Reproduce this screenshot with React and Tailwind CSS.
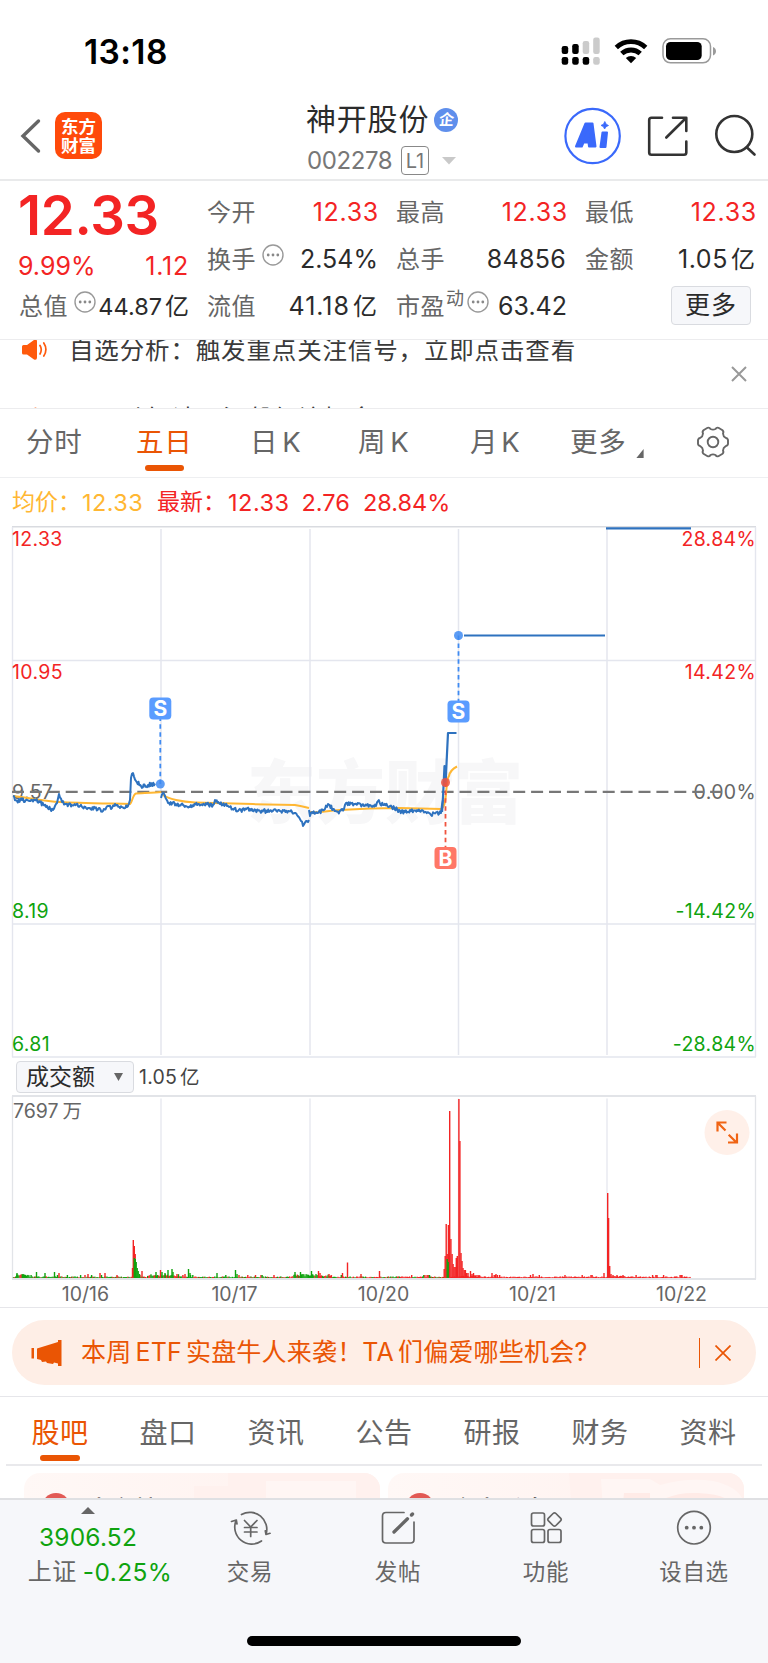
import React from "react";

const FONT = "font-['Inter','Noto_Sans_CJK_SC',sans-serif]";

function rng(seed) {
  let s = seed;
  return () => {
    s = (s * 1664525 + 1013904223) % 4294967296;
    return s / 4294967296;
  };
}

/* Adds minute-by-minute jitter between the key points of an intraday curve. */
function jagged(points, seed, amp) {
  const r = rng(seed);
  const out = [];
  for (let i = 0; i < points.length - 1; i++) {
    const [x0, y0] = points[i];
    const [x1, y1] = points[i + 1];
    const n = Math.max(1, Math.round((x1 - x0) / 0.9));
    for (let k = 0; k < n; k++) {
      const t = k / n;
      const j = k === 0 ? 0 : (r() - 0.5) * amp;
      out.push(`${(x0 + (x1 - x0) * t).toFixed(1)},${(y0 + (y1 - y0) * t + j).toFixed(1)}`);
    }
  }
  out.push(points[points.length - 1].join(","));
  return out.join(" ");
}

const DAY1 = [[13, 796], [17, 801], [22, 800], [35, 800], [40, 802], [46, 807], [53, 810], [57, 803], [59, 794], [62, 802], [66, 804], [72, 805], [80, 806], [88, 808], [95, 808], [103, 811], [108, 806], [112, 808], [115, 804], [120, 808], [128, 806], [130, 800], [131, 778], [133, 773], [136, 781], [141, 786], [148, 785], [155, 783.5]];
const DAY2 = [[161, 798], [163, 793], [168, 803], [176, 804], [190, 807], [199, 804], [213, 805], [215, 800], [220, 804], [228, 806], [238, 811], [250, 809], [260, 811], [280, 811], [292, 812], [297, 815], [301, 821], [303, 826], [306, 821], [309, 820]];
const DAY3 = [[309, 810], [310, 816], [312, 812], [318, 813], [324, 810], [328, 804], [333, 809], [338, 812], [344, 809], [346, 803], [355, 804], [364, 806], [376, 806], [378, 801], [383, 805], [390, 806], [400, 811], [405, 812], [411, 811], [418, 811], [425, 812], [431, 815], [434, 813], [441, 813], [443, 800]];

const CURVES = [jagged(DAY1, 7, 4), jagged(DAY2, 21, 4), jagged(DAY3, 5, 4)];
const V_LINES = [161, 310, 458.5, 607];

function Marker({ x, y, dotY, letter, color, dash }) {
  const y1 = Math.min(y, dotY);
  const y2 = Math.max(y, dotY);
  return (
    <g>
      <line x1={x} x2={x} y1={y1} y2={y2} stroke={dash} strokeWidth="1.8" strokeDasharray="4.5 3.4" />
      <circle cx={x} cy={dotY} r="4.5" fill={dash} fillOpacity="0.85" />
      <rect x={x - 11} y={y - 11} width="22" height="22" rx="4" fill={color} />
      <text x={x} y={y + 7.5} textAnchor="middle" fontSize="21" fontWeight="700" fill="#fff">{letter}</text>
    </g>
  );
}

function AxisLabel({ y, left, right, color }) {
  return (
    <g fontSize="19.5" letterSpacing="0.35" fill={color}>
      <text x="12" y={y}>{left}</text>
      <text x="756" y={y} textAnchor="end">{right}</text>
    </g>
  );
}

function PriceChart() {
  return (
    <svg viewBox="0 526 768 532" className="block h-[532px] w-[768px]">
      <text x="385" y="818" textAnchor="middle" fontSize="69" fontWeight="900" fill="#f7f7f8">东方财富</text>
      <g stroke="#e4e6ee">
        <path d="M12 526.8H756" stroke="#d9dbe0" strokeWidth="1.5" />
        <path d="M12 660.5H756M12 924H756M12 1057H756M12.5 527V1057M755.5 527V1057" strokeWidth="1.4" />
        {V_LINES.map((x) => <path key={x} d={`M${x} 529V1055`} strokeWidth="1.5" />)}
      </g>
      <AxisLabel y={546} left="12.33" right="28.84%" color="#f32424" />
      <AxisLabel y={679} left="10.95" right="14.42%" color="#f32424" />
      <AxisLabel y={798.5} left="9.57" right="0.00%" color="#666" />
      <AxisLabel y={918} left="8.19" right="-14.42%" color="#0fa30f" />
      <AxisLabel y={1050.5} left="6.81" right="-28.84%" color="#0fa30f" />
      <path d="M12 791.8H722" stroke="#777" strokeWidth="2.3" strokeDasharray="12 5.9" />
      <g fill="none" strokeLinejoin="round">
        <g stroke="#ffb733" strokeWidth="2">
          <path d="M13 796C30 798 45 801 60 802S110 803.5 130 804C132 803 133 794 136 793.5S155 793 161 792" />
          <path d="M163 795C168 799 182 802 195 802.5S265 804.5 295 805C301 806 305 807 309 808" />
          <path d="M310 812C315 813.5 325 811 340 810S380 808 400 808L441 809C448 806 445 780 449 776C450 771 453 768.5 457 766.5" />
        </g>
        <g stroke="#2e72bf" strokeWidth="2">
          {CURVES.map((p, i) => <polyline key={i} points={p} />)}
          <path d="M442 812L443 797L444.5 766L445.5 785L446.7 760L448 733H456.5" strokeWidth="2.2" />
          <path d="M464 635.5H605M606 528.3H691" strokeWidth="2.2" />
        </g>
      </g>
      <Marker x={160.3} y={708.5} dotY={784} letter="S" color="#5a9cff" dash="#3f8bf2" />
      <Marker x={458.5} y={711.5} dotY={635.5} letter="S" color="#5a9cff" dash="#3f8bf2" />
      <Marker x={445.5} y={858} dotY={782.5} letter="B" color="#ff7766" dash="#f0543f" />
    </svg>
  );
}

const RED = "#f32424";
const GREEN = "#0fa30f";
const SPIKES = [
  [132.5, 10, RED], [133.3, 38, RED], [134.3, 32, RED], [135.2, 24, RED], [134.3, 20, GREEN], [135.3, 19, GREEN], [136.2, 16, GREEN], [137.2, 10, GREEN], [138.2, 7, GREEN], [139.5, 4, GREEN], [142, 7, RED],
  [17, 5, GREEN], [36.5, 6, GREEN], [45, 5, GREEN], [54.5, 6, GREEN], [59, 5, RED], [88, 4, RED], [100, 5, RED], [105, 5, RED], [117, 3, RED],
  [156, 6, GREEN], [160.5, 8, RED], [162, 6, GREEN], [165, 5, GREEN], [168, 8, GREEN], [172, 9, GREEN], [173, 6, GREEN], [177, 4, RED], [185, 4, RED], [188.5, 9, GREEN], [190, 5, GREEN], [217, 5, GREEN], [235.5, 8, GREEN], [237, 4, GREEN], [274, 3, RED],
  [295, 6, GREEN], [300.5, 6, GREEN], [311.5, 7, GREEN], [318.5, 7, RED], [320, 5, RED], [329, 4, RED], [342.5, 5, RED], [347.5, 15.5, RED], [361, 4, RED], [379.5, 7, RED], [429.5, 3, GREEN],
  [444.2, 9, RED], [445.2, 22, RED], [446.2, 54, RED], [447.2, 24, RED], [448.4, 53, RED], [449.7, 167, RED], [450.9, 39, RED], [452.1, 24, RED], [453.1, 14, RED], [454.1, 11, RED], [455.2, 11, RED], [456.3, 20, RED], [457.3, 22, RED], [458.9, 179, RED], [459.9, 137, RED], [461, 25, RED], [462, 17, RED], [463, 10, RED], [464.2, 8, RED], [465.4, 8, RED], [466.6, 5, RED], [468, 5, RED], [470.5, 7, RED], [472, 4, RED], [473.5, 5, RED], [475, 3, RED], [477, 3, RED], [479, 3, RED], [492, 5, RED], [496, 4, RED], [533, 4, RED], [565, 3, RED],
  [447.2, 19, GREEN], [448.2, 16, GREEN],
  [604, 5, RED], [607.7, 85, RED], [608.6, 60, RED], [609.7, 12, RED], [611, 4, RED], [613, 3, RED], [617, 3, RED], [623, 3, RED], [657, 3, RED], [682, 3, RED],
];

function noiseBars() {
  const r = rng(99);
  const out = [];
  for (let x = 13.5; x < 691; x += 1.1) {
    const late = x > 444;
    const busy = (x > 147 && x < 180) || (x > 292 && x < 332) || (x > 15 && x < 30) || (x > 461 && x < 482) || (x > 611 && x < 625);
    const h = busy ? 1.5 + r() * 2.5 : r() > 0.93 ? 3 : 0.5 + r() * 1.1;
    const up = late || r() > (x < 340 ? 0.62 : 0.42);
    out.push([x, late && busy ? h * 0.6 : h, up ? RED : GREEN]);
  }
  return out;
}
const BARS = [...noiseBars(), ...SPIKES];

function VolumeChart() {
  return (
    <svg viewBox="0 1095 768 186" className="block h-[186px] w-[768px]">
      <g stroke="#e2e4e8" strokeWidth="1.8" fill="none">
        <path d="M12 1096H756M12 1279H756" />
        <path d="M12.5 1096V1279M755.5 1096V1279" strokeWidth="1.3" />
        {V_LINES.map((x) => <path key={x} d={`M${x} 1098.5V1278`} stroke="#e8eaf0" strokeWidth="1.5" />)}
      </g>
      {BARS.map(([x, h, c], i) => <rect key={i} x={x - 0.7} y={1278 - h} width="1.4" height={h} fill={c} />)}
      <text x="13" y="1118" fontSize="19.5" fill="#666">7697<tspan dx="4">万</tspan></text>
      <circle cx="727" cy="1132.5" r="22.5" fill="#fff0e9" />
      <path d="M717.5 1131.5V1122.5H726.5M718 1123L725.5 1130.5M728.7 1134.7L736.5 1142.5M737 1133.5V1142.5H728" fill="none" stroke="#f06414" strokeWidth="2.2" />
    </svg>
  );
}

function StatusBar() {
  return (
    <div className="flex h-[103px] items-start justify-between pl-[84px] pr-[50px]">
      <div className="mt-[32px] text-[33.5px] leading-[40px] font-semibold tracking-[0.4px] text-black">13:18</div>
      <svg viewBox="560 34 158 34" className="mt-[34px] h-[34px] w-[158px]">
        <g fill="#000">
          <rect x="561.7" y="46" width="6.5" height="8" rx="2.2" />
          <rect x="572.2" y="44" width="6.5" height="10" rx="2.2" />
          <rect x="561.7" y="57" width="6.5" height="7.7" rx="2.2" />
          <rect x="572.2" y="57" width="6.5" height="7.7" rx="2.2" />
          <rect x="582.7" y="57" width="6.5" height="7.7" rx="2.2" />
        </g>
        <g fill="#cbcbcb">
          <rect x="582.7" y="41" width="6.5" height="13" rx="2.2" />
          <rect x="593.2" y="37.5" width="6.5" height="16.5" rx="2.2" />
          <rect x="593.2" y="57" width="6.5" height="7.7" rx="2.2" />
        </g>
        <g fill="none" stroke="#000" strokeWidth="4.8">
          <path d="M616.3 47.5A21.5 21.5 0 0 1 645.7 47.5" />
          <path d="M621.8 53.6A13.5 13.5 0 0 1 640.2 53.6" />
        </g>
        <path d="M625.8 58A8 8 0 0 1 636.2 58L631 63.2Z" fill="#000" />
        <rect x="663" y="38.8" width="47.5" height="24" rx="7.5" fill="none" stroke="#9a9a9a" strokeWidth="1.5" />
        <rect x="666" y="42" width="35.7" height="18" rx="4.5" fill="#000" />
        <path d="M713 47V55.5C717 54 717 48.5 713 47Z" fill="#9a9a9a" />
      </svg>
    </div>
  );
}

function Header() {
  return (
    <div className="relative flex h-[78px] items-start justify-between border-b-2 border-[#e9eaeb] pr-[10px] pl-[20px]">
      <div className="flex items-start">
        <svg viewBox="20 117 24 40" className="mt-[14px] h-[40px] w-[24px]">
          <path d="M38.5 121L23 136L38.5 151" fill="none" stroke="#666" strokeWidth="3.4" strokeLinecap="round" />
        </svg>
        <div className="mt-[9px] ml-[11px] flex h-[47px] w-[47px] flex-col items-center justify-center rounded-[10px] bg-[#ff4a0a] text-[17.5px] leading-[19px] font-bold text-white">
          <div>东方</div>
          <div>财富</div>
        </div>
      </div>
      <div className="absolute top-[-6px] left-[306px] flex flex-col">
        <div className="flex items-center">
          <span className="text-[30px] leading-[44px] tracking-[0.8px] text-[#2b2b2b]">神开股份</span>
          <span className="mt-[2px] ml-[5px] flex size-[24px] items-center justify-center rounded-full bg-[#5f8fec] text-[15px] font-bold text-white"><span className="-skew-x-6">企</span></span>
        </div>
        <div className="mt-[5px] flex items-center">
          <span className="w-[84px] pl-[1px] text-[24px] leading-[28px] tracking-[-0.4px] whitespace-nowrap text-[#777]">002278</span>
          <span className="ml-[11px] flex h-[29px] w-[28px] items-center justify-center rounded-[4px] border border-[#888] text-[20px] text-[#777]">L1</span>
          <svg viewBox="0 0 14 8" className="ml-[13px] h-[8px] w-[14px]"><path d="M0 0H14L7 7.5Z" fill="#c9c9c9" /></svg>
        </div>
      </div>
      <svg viewBox="562 105 196 62" className="mt-[2px] h-[62px] w-[196px]">
        <circle cx="592.6" cy="136" r="27.2" fill="none" stroke="#3a69fb" strokeWidth="2.2" />
        <g fill="#3a69fb" stroke="#3a69fb" strokeWidth="2" strokeLinejoin="round">
          <path fillRule="evenodd" d="M576 146.5L585.5 123.5H592.5L595.5 146.5H589L588.5 142.5H583.5L581.8 146.5ZM585.5 137H588.5L587.8 131Z" />
          <path d="M602.5 132.5H607L605.5 147H600.5Z" />
          <path d="M604.8 121.5L606.2 124.2L608.5 125.5L606 126.8L604.6 129L603.3 126.6L601 125.4L603.5 124.2Z" strokeWidth="0.8" />
        </g>
        <g fill="none" stroke="#333" strokeWidth="2.6" strokeLinecap="round" strokeLinejoin="round">
          <path d="M662 117.8H651.5Q649.2 117.8 649.2 120V152.5Q649.2 154.8 651.5 154.8H684Q686.3 154.8 686.3 152.5V141.5" />
          <path d="M673 117.8H686.3V131M685.5 118.5L666.3 137.5" />
          <circle cx="734.3" cy="134" r="18" />
          <path d="M747 147.5L754.5 154.5" />
        </g>
      </svg>
    </div>
  );
}

function Dots() {
  return (
    <svg viewBox="0 0 22 22" className="size-[22px] shrink-0">
      <circle cx="11" cy="11" r="10" fill="none" stroke="#999" strokeWidth="1.4" />
      <g fill="#888"><circle cx="6.2" cy="11" r="1.4" /><circle cx="11" cy="11" r="1.4" /><circle cx="15.8" cy="11" r="1.4" /></g>
    </svg>
  );
}

function Cell({ label, value, unit, red, dots, sup, fit = "text-[25px] tracking-[0.3px]" }) {
  return (
    <div className="flex h-[47px] items-center justify-between">
      <span className="flex items-center text-[24px] tracking-[0.5px] whitespace-nowrap text-[#666]">
        {label}
        {sup && <span className="mt-[-16px] ml-[1px] text-[18px]">{sup}</span>}
        {dots && <span className={sup ? "mt-[-10px] ml-[2px]" : "mt-[-10px] ml-[6px]"}><Dots /></span>}
      </span>
      <span className={`${fit} whitespace-nowrap ${red ? "text-[#f32424]" : "text-[#2b2b2b]"}`}>
        {value}{unit && <span className="ml-[3px] text-[24px] tracking-normal">{unit}</span>}
      </span>
    </div>
  );
}

function Quote() {
  const ones = "text-[25px] tracking-[0.7px] -mr-[2px]";
  return (
    <div className="grid h-[159px] grid-cols-[169px_170px_170px_170px] gap-x-[19px] border-b border-[#ececee] pt-[8px] pl-[19px]">
      <div>
        <div className="-ml-[1px] h-[55px] text-[54.5px] leading-[53px] font-semibold tracking-[-0.3px] text-[#f32424]">12.33</div>
        <div className="-ml-px flex h-[39px] items-center justify-between pt-[7px] text-[25px] text-[#f32424]"><span>9.99%</span><span className="-mr-px tracking-[0.8px]">1.12</span></div>
        <Cell label="总值" value="44.87" unit="亿" dots fit="text-[23.5px] tracking-[0px] -mr-px" />
      </div>
      <div>
        <Cell label="今开" value="12.33" red fit={ones} />
        <Cell label="换手" value="2.54%" dots fit="text-[25px] -mr-[1px]" />
        <Cell label="流值" value="41.18" unit="亿" fit="text-[25px] tracking-[1px]" />
      </div>
      <div>
        <Cell label="最高" value="12.33" red fit={ones} />
        <Cell label="总手" value="84856" />
        <Cell label="市盈" value="63.42" sup="动" dots fit="text-[25px] -mr-px" />
      </div>
      <div>
        <Cell label="最低" value="12.33" red fit={ones} />
        <Cell label="金额" value="1.05" unit="亿" fit="text-[25px] tracking-[0.6px]" />
        <div className="flex h-[47px] items-start justify-end pr-[4px]">
          <div className="mt-[3px] flex h-[39px] w-[80px] items-center justify-center rounded-[4px] border border-[#d9dbe0] bg-[#f6f7fa] text-[25px] tracking-[1px] text-[#2b2b2b]">更多</div>
        </div>
      </div>
    </div>
  );
}

function Speaker() {
  return (
    <svg viewBox="0 0 26 22" className="-mt-px h-[22px] w-[26px] shrink-0">
      <path d="M1.5 6Q0 6 0 7.5V14Q0 15.5 1.5 15.5H5L12 20.5Q15 21.5 15 18.5V2.5Q15 -.5 12 1L5 6Z" fill="#ff5a0c" />
      <path d="M18 6.5Q20.5 10.5 18 15M21.8 4Q26 10.5 21.8 17" fill="none" stroke="#ff5a0c" strokeWidth="1.7" strokeLinecap="round" />
    </svg>
  );
}

function Ticker() {
  const line = "text-[24.5px] leading-[36px] tracking-[0.85px] whitespace-nowrap text-[#3a3a3a]";
  return (
    <div className="relative flex h-[69px] justify-between overflow-hidden border-b border-[#ececee]">
      <div className="flex flex-col">
        <div className="flex h-[68px] shrink-0 items-start pl-[22px]">
          <Speaker />
          <span className={`mt-[-8px] ml-[21px] ${line}`}>自选分析：触发重点关注信号，立即点击查看</span>
        </div>
        <div className="flex shrink-0 items-start pl-[22px]">
          <Speaker />
          <span className={`mt-[-7px] ml-[48px] ${line}`}>异动解读：涅槃经济概念</span>
        </div>
      </div>
      <svg viewBox="0 0 16 16" className="mt-[26px] mr-[21px] size-[16px]"><path d="M1 1L15 15M15 1L1 15" stroke="#999" strokeWidth="2" /></svg>
    </div>
  );
}

function PeriodTabs() {
  const item = "flex h-[68px] shrink-0 items-center text-[27.5px] whitespace-nowrap tracking-[0.8px]";
  return (
    <div className="flex h-[69px] border-b border-[#eeeff1] pl-[26px] text-[#666]">
      <span className={`${item} w-[110px]`}>分时</span>
      <span className={`${item} relative w-[114px] text-[#ea5504]`}>
        五日<i className="absolute bottom-[6px] left-[9px] h-[6px] w-[39px] rounded-full bg-[#ea5504]" />
      </span>
      <span className={`${item} w-[108px]`}>日<span className="ml-[4px]">K</span></span>
      <span className={`${item} w-[112px]`}>周<span className="ml-[4px]">K</span></span>
      <span className={`${item} w-[100px]`}>月<span className="ml-[3px]">K</span></span>
      <span className={`${item} w-[127px]`}>更多
        <svg viewBox="0 0 8 10" className="mt-[21px] ml-[9px] h-[9px] w-[8px]"><path d="M8 0V10H0Z" fill="#666" /></svg>
      </span>
      <svg viewBox="0 0 32 32" className="mt-[17px] size-[32px]">
        <path d="M10.5 1.8Q12.5 1.2 13.5 3Q16 4.2 18.5 3Q19.5 1.2 21.5 1.8L25.5 4.2Q27 5.5 26 7.5Q26.2 10.5 28.5 11.7Q30.7 12 31 14V18Q30.7 20 28.5 20.3Q26.2 21.5 26 24.5Q27 26.5 25.5 27.8L21.5 30.2Q19.5 30.8 18.5 29Q16 27.8 13.5 29Q12.5 30.8 10.5 30.2L6.5 27.8Q5 26.5 6 24.5Q5.8 21.5 3.5 20.3Q1.3 20 1 18V14Q1.3 12 3.5 11.7Q5.8 10.5 6 7.5Q5 5.5 6.5 4.2Z" fill="none" stroke="#666" strokeWidth="1.9" />
        <circle cx="16" cy="16" r="5.3" fill="none" stroke="#666" strokeWidth="1.9" />
      </svg>
    </div>
  );
}

function Legend() {
  return (
    <div className="flex h-[48px] items-center pt-px pl-[12px] text-[23.5px] whitespace-nowrap text-[#f32424]">
      <span className="w-[70px] text-[23px] text-[#ffb733]">均价：</span>
      <span className="w-[75px] tracking-[0.4px] text-[#ffb733]">12.33</span>
      <span className="w-[71px] text-[23px]">最新：</span>
      <span className="w-[73.5px] tracking-[0.5px]">12.33</span>
      <span className="w-[61.5px]">2.76</span>
      <span>28.84%</span>
    </div>
  );
}

function VolumeHeader() {
  return (
    <div className="flex h-[37px] items-center pl-[16px]">
      <div className="flex h-[32px] w-[118px] items-center justify-between rounded-[4px] border border-[#d9dbe0] bg-[#f6f7fa] pt-px pr-[10px] pl-[9px] text-[23px] text-[#2b2b2b]">
        成交额
        <svg viewBox="0 0 9 8" className="h-[8px] w-[9px]"><path d="M0 0H9L4.5 8Z" fill="#666" /></svg>
      </div>
      <span className="ml-[5px] pt-[2px] text-[19.5px] tracking-[0.2px] text-[#444]">1.05<span className="ml-[3px]">亿</span></span>
    </div>
  );
}

function Banner() {
  return (
    <div className="h-[90px] border-t border-b border-[#e6e6ea] pt-[12px]">
      <div className="mx-[12px] flex h-[65px] items-center rounded-full bg-[#feeee6] pl-[19px] text-[#ea5504]">
        <svg viewBox="0 0 32 28" className="h-[28px] w-[32px] shrink-0">
          <path d="M0.5 9H3V19.5H0.5ZM6 9.5L27 3V1H30.5V27H27V24.5L23 23.5L22 25L16 24L15 22.5L11 23L10 21L6 20Z" fill="#ea5504" />
        </svg>
        <span className="ml-[18px] w-[618px] shrink-0 pt-px text-[25px] tracking-[0.2px] whitespace-nowrap">本周<span className="mx-[4px]">ETF</span>实盘牛人来袭！<span className="mr-[4px]">TA</span>们偏爱哪些机会?</span>
        <i className="h-[30px] w-px shrink-0 bg-[#ea5504]" />
        <svg viewBox="0 0 16 16" className="ml-[15px] size-[16px] shrink-0"><path d="M.5 .5L15.5 15.5M15.5 .5L.5 15.5" stroke="#ea5504" strokeWidth="1.7" /></svg>
      </div>
    </div>
  );
}

function SectionTabs() {
  const tabs = ["股吧", "盘口", "资讯", "公告", "研报", "财务", "资料"];
  return (
    <div className="mx-[6px] flex h-[69px] border-b-2 border-[#e9e9ec]">
      {tabs.map((t, i) => (
        <div key={t} className={`relative flex w-[108px] items-center justify-center pt-[4px] text-[28px] tracking-[0.6px] ${i === 0 ? "text-[#ea5504]" : "text-[#666]"}`}>
          {t}
          {i === 0 && <i className="absolute bottom-[3px] left-[34px] h-[6px] w-[40px] rounded-full bg-[#ea5504]" />}
        </div>
      ))}
    </div>
  );
}

function Cards() {
  return (
    <div className="flex h-[32px] gap-[8px] overflow-hidden pt-[7px] pl-[24px]">
      {["本东榜", "今大看盘"].map((t, i) => (
        <div key={t} className="relative h-[80px] w-[356px] shrink-0 overflow-hidden rounded-[16px] bg-gradient-to-r from-[#fff8f6] to-[#fff1ee]">
          {i === 0 ? (
            <svg viewBox="0 0 356 80" className="absolute inset-0 h-[80px] w-[356px]">
              <path d="M204 0H356V80H170V13H204Z" fill="#fff1ee" /><path d="M242 8H332V80H242Z" fill="#fff6f4" />
            </svg>
          ) : (
            <svg viewBox="0 0 356 80" className="absolute inset-0 h-[80px] w-[356px]">
              <path d="M181 0H356V80H187Z" fill="#fff1ee" /><path d="M213 6H262L272 12Q300 4 325 8Q352 14 356 30V80H218Z" fill="#fff6f4" />
              <path d="M236 20H262V80H230ZM276 26Q290 19 310 20Q332 21 338 26V80H276Z" fill="#ffebe7" />
            </svg>
          )}
          <div className="relative flex pl-[18px]">
            <div className="mt-[20px] size-[28px] rounded-full bg-[#e25a55]" />
            <div className="mt-[19px] ml-[17px] text-[24px] leading-[36px] font-medium text-[#222]">{t}</div>
          </div>
        </div>
      ))}
    </div>
  );
}

function NavItem({ label, children }) {
  return (
    <div className="flex w-[148px] flex-col items-center">
      <svg viewBox="0 0 42 36" className="mt-[10px] h-[36px] w-[42px]" fill="none" stroke="#666" strokeWidth="1.7" strokeLinecap="round" strokeLinejoin="round">{children}</svg>
      <span className="mt-[9px] text-[22.5px] leading-[34px] tracking-[0.7px] text-[#666]">{label}</span>
    </div>
  );
}

function BottomNav() {
  return (
    <div className="flex h-[165px] flex-col items-center justify-between border-t-2 border-[#dfe0e3] bg-[#f6f7fa] pb-[17px]">
      <div className="flex w-full">
        <div className="flex w-[176px] shrink-0 flex-col items-center pt-[7px] text-[24.5px] text-[#0fa30f]">
          <svg viewBox="0 0 14 7" className="h-[7px] w-[14px]"><path d="M0 7H14L7 0Z" fill="#666" /></svg>
          <div className="mt-[6px] leading-[34px] tracking-[0.2px]">3906.52</div>
          <div className="flex pt-px pl-[24px] leading-[34px] tracking-[0.4px] whitespace-nowrap"><span className="mr-[6px] text-[24px] tracking-[0.5px] text-[#666]">上证</span>-0.25%</div>
        </div>
        <NavItem label="交易">
          <path d="M12.5 4.5A17 17 0 0 1 37 24.5L41 23.3M37 24.5L36.3 20.8M32.5 31A17 17 0 0 1 7.3 10L2.5 11.5M7.3 10L8 14" />
          <path d="M15.5 10.5L21.7 17L28 10.5M21.7 17V26.5M15.5 17.5H28M15.5 22H28" />
        </NavItem>
        <NavItem label="发帖">
          <path d="M27 2.5H9Q5.5 2.5 5.5 6V29.5Q5.5 33 9 33H33.5Q37 33 37 29.5V12" />
          <path d="M17 22L30.5 8.8" strokeWidth="3.3" /><path d="M34.500 5L35.500 4" strokeWidth="3.5" />
        </NavItem>
        <NavItem label="功能">
          <rect x="6.5" y="3" width="13" height="13" rx="2" />
          <rect x="6.5" y="19.5" width="13" height="13" rx="2" />
          <rect x="23" y="19.5" width="13" height="13" rx="2" />
          <rect x="24.25" y="4.25" width="10.5" height="10.5" rx="2" transform="rotate(45 29.5 9.5)" />
        </NavItem>
        <NavItem label="设自选">
          <circle cx="21" cy="17.7" r="16.3" />
          <g fill="#666" stroke="none"><circle cx="13.7" cy="17.7" r="1.9" /><circle cx="21" cy="17.7" r="1.9" /><circle cx="28.3" cy="17.7" r="1.9" /></g>
        </NavItem>
      </div>
      <div className="h-[10px] w-[274px] rounded-full bg-black" />
    </div>
  );
}

export default function App() {
  return (
    <div className={`flex h-[1663px] w-[768px] flex-col overflow-hidden bg-white *:shrink-0 ${FONT}`}>
      <StatusBar />
      <Header />
      <Quote />
      <Ticker />
      <PeriodTabs />
      <Legend />
      <PriceChart />
      <VolumeHeader />
      <VolumeChart />
      <div className="flex h-[26px] pl-[11px] text-[19.5px] leading-[26px] text-[#666]">
        {["10/16", "10/17", "10/20", "10/21", "10/22"].map((d) => <span key={d} className="w-[149px] text-center">{d}</span>)}
      </div>
      <Banner />
      <SectionTabs />
      <Cards />
      <BottomNav />
    </div>
  );
}
